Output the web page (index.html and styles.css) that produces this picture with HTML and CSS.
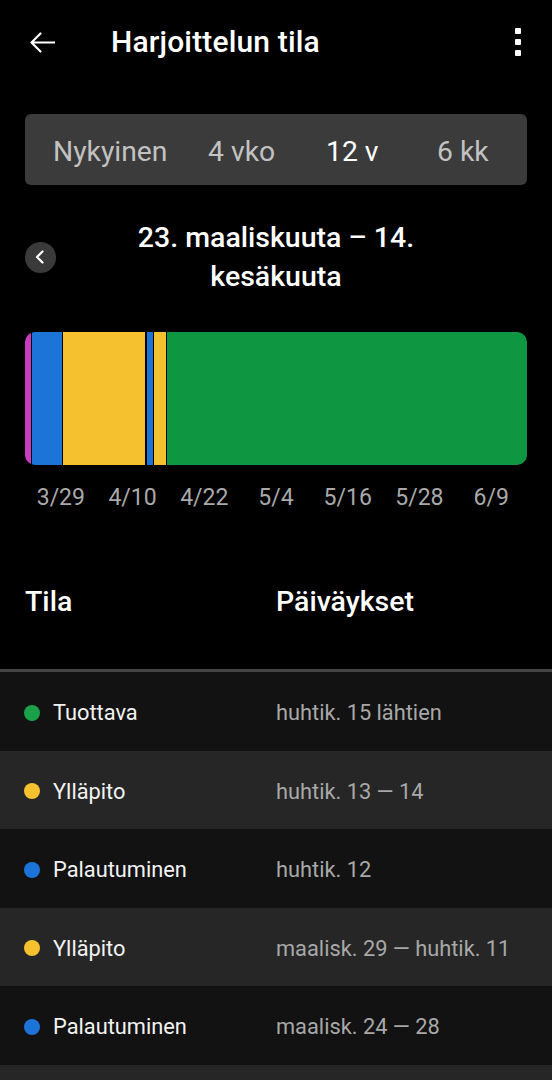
FILE: index.html
```html
<!DOCTYPE html>
<html lang="fi">
<head>
<meta charset="utf-8">
<title>Harjoittelun tila</title>
<link rel="stylesheet" href="styles.css">
</head>
<body>
<header class="appbar">
  <button class="icon-btn back" aria-label="Takaisin">
    <svg width="25" height="21" viewBox="0 0 25 21"><path d="M1.5 10.5H24.5M10.5 1.5L1.5 10.5L10.5 19.5" fill="none" stroke="#fff" stroke-width="2.2" stroke-linecap="round" stroke-linejoin="round"/></svg>
  </button>
  <h1 class="title">Harjoittelun tila</h1>
  <button class="icon-btn menu" aria-label="Valikko">
    <span class="sq"></span><span class="sq"></span><span class="sq"></span>
  </button>
</header>

<nav class="segments">
  <span class="seg">Nykyinen</span>
  <span class="seg">4 vko</span>
  <span class="seg active">12 v</span>
  <span class="seg">6 kk</span>
</nav>

<section class="range">
  <button class="circle-btn" aria-label="Edellinen">
    <svg width="10" height="14" viewBox="0 0 10 14"><path d="M7.5 1.5L2 7L7.5 12.5" fill="none" stroke="#fff" stroke-width="2.2" stroke-linecap="round" stroke-linejoin="round"/></svg>
  </button>
  <h2 class="range-title">23. maaliskuuta – 14. kesäkuuta</h2>
</section>

<div class="bar">
  <div class="part magenta" style="flex-grow:1"></div>
  <div class="part blue" style="flex-grow:5"></div>
  <div class="part yellow" style="flex-grow:14"></div>
  <div class="part blue" style="flex-grow:1"></div>
  <div class="part yellow" style="flex-grow:2"></div>
  <div class="part green" style="flex-grow:61"></div>
</div>

<div class="axis">
  <span>3/29</span><span>4/10</span><span>4/22</span><span>5/4</span><span>5/16</span><span>5/28</span><span>6/9</span>
</div>

<div class="thead">
  <span>Tila</span>
  <span>Päiväykset</span>
</div>

<ul class="rows">
  <li class="row"><span class="name"><i class="dot green"></i>Tuottava</span><span class="date">huhtik. 15 lähtien</span></li>
  <li class="row"><span class="name"><i class="dot yellow"></i>Ylläpito</span><span class="date">huhtik. 13 — 14</span></li>
  <li class="row"><span class="name"><i class="dot blue"></i>Palautuminen</span><span class="date">huhtik. 12</span></li>
  <li class="row"><span class="name"><i class="dot yellow"></i>Ylläpito</span><span class="date">maalisk. 29 — huhtik. 11</span></li>
  <li class="row"><span class="name"><i class="dot blue"></i>Palautuminen</span><span class="date">maalisk. 24 — 28</span></li>
  <li class="row"></li>
</ul>
</body>
</html>
```
FILE: styles.css
```css
* { box-sizing: border-box; }
html, body { margin: 0; padding: 0; background: #000; }
body {
  font-family: Roboto, "Noto Sans", "Liberation Sans", sans-serif;
  color: #fff;
  width: 552px;
  overflow-x: hidden;
}
button {
  background: none;
  border: 0;
  padding: 0;
  margin: 0;
  color: inherit;
  font: inherit;
  cursor: pointer;
}

.appbar {
  display: flex;
  align-items: center;
  height: 84px;
  padding: 0 31px 0 30px;
}
.icon-btn { display: flex; align-items: center; justify-content: center; }
.back { width: 25px; height: 21px; }
.back svg { display: block; }
.title {
  flex: 1;
  margin: 0 0 0 56px;
  font-size: 30px;
  font-weight: 500;
  line-height: 36px;
  letter-spacing: 0.15px;
  color: #fff;
  -webkit-font-smoothing: antialiased;
}
.menu {
  flex-direction: column;
  gap: 4.5px;
  width: 6px;
}
.sq {
  display: block;
  width: 6px;
  height: 6.5px;
  background: #fff;
  border-radius: 1px;
}

.segments {
  margin: 30px 25px 0;
  height: 71px;
  background: #3b3b3b;
  border-radius: 6px;
  display: grid;
  grid-template-columns: 155px 118px 111px auto;
  align-items: center;
  padding: 4px 0 0 28px;
}
.seg {
  font-size: 28.3px;
  line-height: 34px;
  color: #c2c2c2;
}
.seg.active { color: #fff; }

.range {
  margin-top: 33px;
  display: grid;
  grid-template-columns: 60px 1fr 60px;
  align-items: center;
  padding: 0 25px;
}
.circle-btn {
  width: 31px;
  height: 31px;
  border-radius: 50%;
  background: #3a3a3a;
  display: flex;
  align-items: center;
  justify-content: center;
}
.circle-btn svg { display: block; margin-left: -1px; }
.range-title {
  margin: 0;
  text-align: center;
  font-size: 28.5px;
  font-weight: 500;
  line-height: 39px;
  color: #fff;
}

.bar {
  margin: 36px 25px 0;
  height: 133px;
  display: flex;
  gap: 1.2px;
  border-radius: 10px;
  overflow: hidden;
  background: #000;
}
.part { flex-basis: 0; }
.magenta { background: #c93cc1; }
.blue { background: #1c74d9; }
.yellow { background: #f6c12f; }
.green { background: #0e9641; }

.axis {
  margin: 18px 25px 0;
  display: grid;
  grid-template-columns: repeat(7, 1fr);
  text-align: center;
  font-size: 23px;
  line-height: 30px;
  color: #a9a9a9;
}

.thead {
  margin-top: 72px;
  display: grid;
  grid-template-columns: 251px 1fr;
  padding-left: 25px;
  font-size: 28.5px;
  font-weight: 500;
  line-height: 34px;
  color: #fff;
}

.rows {
  list-style: none;
  margin: 50px 0 0;
  padding: 0;
  border-top: 3px solid #434343;
}
.row {
  height: 78.5px;
  display: grid;
  grid-template-columns: 252px 1fr;
  align-items: center;
  padding: 3px 0 0 24px;
  background: #121212;
}
.row:nth-child(even) { background: #262626; }
.name {
  display: flex;
  align-items: center;
  font-size: 21.8px;
  color: #f2f2f2;
}
.dot {
  width: 16px;
  height: 16px;
  border-radius: 50%;
  margin-right: 13px;
  flex: none;
}
.dot.green { background: #1aa048; }
.date {
  font-size: 21.8px;
  color: #a8a8a8;
}
```
